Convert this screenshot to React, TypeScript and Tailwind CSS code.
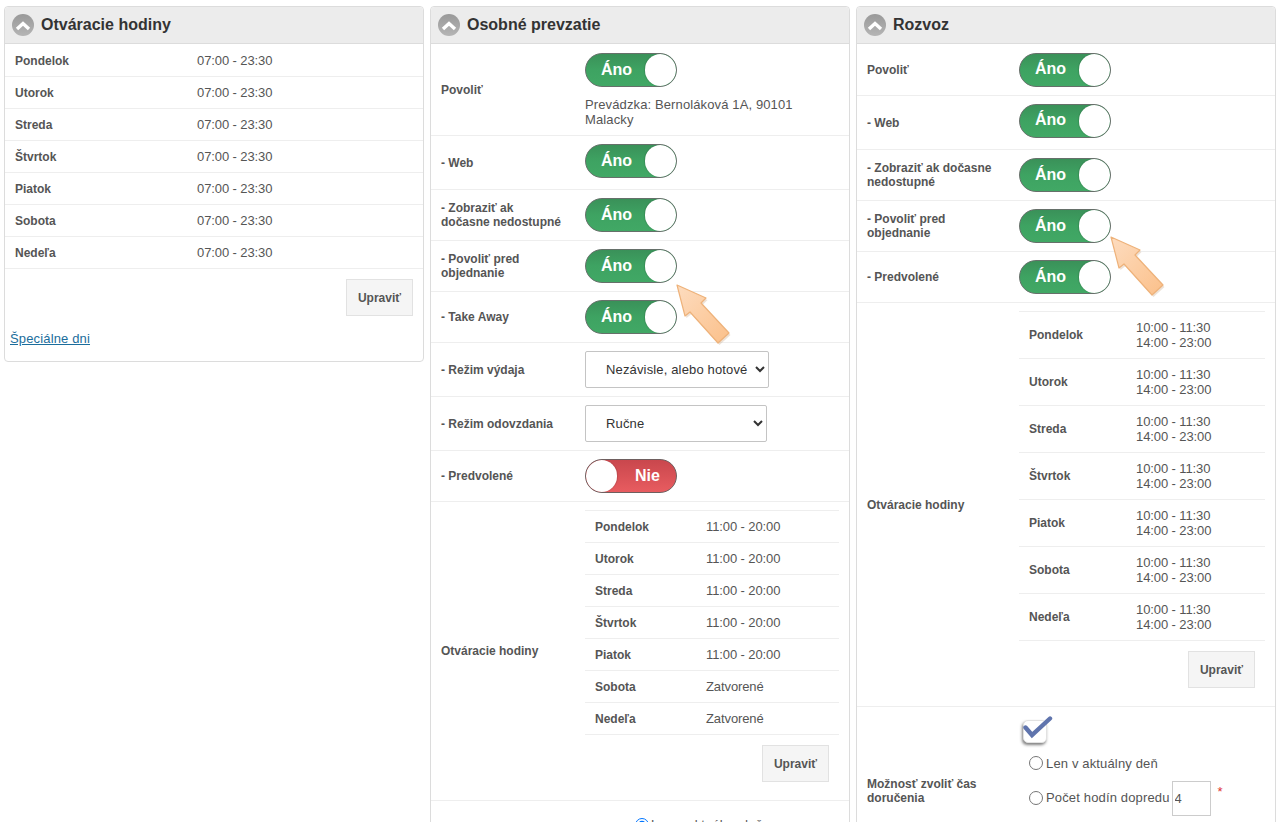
import React from "react";

const FONT = "font-['Liberation_Sans',Arial,sans-serif]";

function Arrow({ className }: { className: string }) {
  return (
    <svg className={`absolute pointer-events-none z-10 ${className}`} width="62" height="68" viewBox="0 0 62 68">
      <defs>
        <linearGradient id="ag" x1="0" y1="0" x2="1" y2="1">
          <stop offset="0" stopColor="#fddcbf" />
          <stop offset="1" stopColor="#fbc08a" />
        </linearGradient>
      </defs>
      <path d="M1 1 L30 14 L25 19 L53 49 L42 59 L14 28 L9 32 Z" fill="#b98a60" opacity="0.25" transform="translate(1.5 2)" />
      <path d="M1 1 L30 14 L25 19 L53 49 L42 59 L14 28 L9 32 Z" fill="url(#ag)" stroke="#eeb27a" strokeWidth="1.2" strokeLinejoin="round" />
    </svg>
  );
}

function Toggle({ on = true, arrow }: { on?: boolean; arrow?: string }) {
  return (
    <div className="relative w-[92px] h-[34px]">
      {on ? (
        <div className="flex items-center h-full rounded-full border border-[#66706a] bg-linear-to-b from-[#3a9159] via-[#3ea362] to-[#41a865] overflow-hidden">
          <span className="w-[58px] pl-[3px] text-center text-white font-bold text-[16px] leading-none -mt-[1px]">Áno</span>
          <span className="ml-auto w-[31px] h-[32px] rounded-full bg-white shadow-[-1px_0_1px_rgba(0,0,0,0.12)]" />
        </div>
      ) : (
        <div className="flex items-center h-full rounded-full border border-[#6f5f5f] bg-linear-to-b from-[#c9474d] to-[#e85c60] overflow-hidden">
          <span className="w-[31px] h-[32px] rounded-full bg-white shadow-[1px_0_1px_rgba(0,0,0,0.12)]" />
          <span className="flex-1 pl-[2px] text-center text-white font-bold text-[16px] leading-none -mt-[1px]">Nie</span>
        </div>
      )}
      {arrow && <Arrow className={arrow} />}
    </div>
  );
}

function Header({ title }: { title: string }) {
  return (
    <div className="flex items-center h-[37px] bg-[#ececec] border-b border-[#dcdcdc] rounded-t-[4px] pl-[7px] gap-[7px]">
      <span className="flex items-center justify-center w-[22px] h-[22px] rounded-full bg-linear-to-b from-[#999999] to-[#b5b5b5]">
        <svg width="16" height="11" viewBox="0 0 16 11">
          <path d="M2 9 L8 3.5 L14 9" fill="none" stroke="#fff" strokeWidth="3.4" />
        </svg>
      </span>
      <span className="text-[16px] font-bold text-[#333] leading-none">{title}</span>
    </div>
  );
}

function Button() {
  return (
    <button className="w-[67px] h-[37px] bg-[#f5f5f5] border border-[#e2e2e2] text-[12px] font-bold text-[#555]">
      Upraviť
    </button>
  );
}

function Row({
  label,
  labelW,
  className,
  children,
}: {
  label: React.ReactNode;
  labelW: string;
  className: string;
  children: React.ReactNode;
}) {
  return (
    <div className={`flex items-center border-b border-[#eeeeee] ${className}`}>
      <div className={`${labelW} shrink-0 pl-[10px] pr-[10px] text-[12px] leading-[14px] font-bold text-[#555]`}>
        {label}
      </div>
      <div className="flex-1 min-w-0">{children}</div>
    </div>
  );
}

function Hours({ data }: { data: [string, string][] }) {
  return (
    <div className="border-t border-[#eeeeee]">
      {data.map(([d, t]) => (
        <div key={d} className="flex items-center h-[32px] border-b border-[#eeeeee]">
          <span className="w-[121px] pl-[10px] text-[12px] font-bold text-[#555]">{d}</span>
          <span className="text-[13px] tracking-[-0.1px] text-[#555]">{t}</span>
        </div>
      ))}
    </div>
  );
}

function Hours2() {
  const days = ["Pondelok", "Utorok", "Streda", "Štvrtok", "Piatok", "Sobota", "Nedeľa"];
  return (
    <div className="border-t border-[#eeeeee]">
      {days.map((d) => (
        <div key={d} className="flex items-center h-[47px] border-b border-[#eeeeee]">
          <span className="w-[117px] pl-[10px] text-[12px] font-bold text-[#555]">{d}</span>
          <span className="text-[13px] leading-[15px] tracking-[-0.1px] text-[#555]">
            10:00 - 11:30
            <br />
            14:00 - 23:00
          </span>
        </div>
      ))}
    </div>
  );
}

const panel = "border border-[#dcdcdc] rounded-[4px] bg-white";

export default function App() {
  const d7 = ["Pondelok", "Utorok", "Streda", "Štvrtok", "Piatok", "Sobota", "Nedeľa"];
  const mid: [string, string][] = [
    ["Pondelok", "11:00 - 20:00"],
    ["Utorok", "11:00 - 20:00"],
    ["Streda", "11:00 - 20:00"],
    ["Štvrtok", "11:00 - 20:00"],
    ["Piatok", "11:00 - 20:00"],
    ["Sobota", "Zatvorené"],
    ["Nedeľa", "Zatvorené"],
  ];
  return (
    <div className={`${FONT} h-[822px] overflow-hidden bg-white pt-[6px] pl-[4px] flex items-start gap-[6px]`}>
      {/* Left */}
      <section className={`${panel} w-[420px] h-[356px]`}>
        <Header title="Otváracie hodiny" />
        <div className="pt-[1px]">
          {d7.map((d) => (
            <div key={d} className="flex items-center h-[32px] border-b border-[#eeeeee]">
              <span className="w-[192px] pl-[10px] text-[12px] font-bold text-[#555]">{d}</span>
              <span className="text-[13px] tracking-[-0.1px] text-[#555]">07:00 - 23:30</span>
            </div>
          ))}
        </div>
        <div className="flex justify-end pr-[10px] pt-[10px]">
          <Button />
        </div>
        <div className="pl-[5px] pt-[10px]">
          <a href="#" className="text-[13px] tracking-[0.15px] underline text-[#1b6d9c]">
            Špeciálne dni
          </a>
        </div>
      </section>

      {/* Middle */}
      <section className={`${panel} w-[420px] h-[900px] rounded-b-none`}>
        <Header title="Osobné prevzatie" />
        <Row label="Povoliť" labelW="w-[154px]" className="pt-[9px] pb-[8px]">
          <Toggle />
          <div className="mt-[10px] text-[13px] leading-[15px] tracking-[0.12px] text-[#555] w-[230px]">
            Prevádzka: Bernoláková 1A, 90101 Malacky
          </div>
        </Row>
        <Row label="- Web" labelW="w-[154px]" className="h-[54px]">
          <div className="pb-[3px]">
            <Toggle />
          </div>
        </Row>
        <Row label={<>- Zobraziť ak<br />dočasne nedostupné</>} labelW="w-[154px]" className="h-[51px]">
          <Toggle />
        </Row>
        <Row label={<>- Povoliť pred<br />objednanie</>} labelW="w-[154px]" className="h-[51px]">
          <Toggle arrow="left-[91px] top-[35px]" />
        </Row>
        <Row label="- Take Away" labelW="w-[154px]" className="h-[51px]">
          <Toggle />
        </Row>
        <Row label="- Režim výdaja" labelW="w-[154px]" className="h-[54px]">
          <select className="w-[184px] h-[37px] pl-[16px] bg-white border border-[#c4c4c4] rounded-[2px] text-[13px] tracking-[0.15px] text-[#333]">
            <option>Nezávisle, alebo hotové</option>
          </select>
        </Row>
        <Row label="- Režim odovzdania" labelW="w-[154px]" className="h-[54px]">
          <select className="w-[182px] h-[37px] pl-[16px] bg-white border border-[#c4c4c4] rounded-[2px] text-[13px] tracking-[0.15px] text-[#333]">
            <option>Ručne</option>
          </select>
        </Row>
        <Row label="- Predvolené" labelW="w-[154px]" className="h-[51px]">
          <Toggle on={false} />
        </Row>
        <Row label="Otváracie hodiny" labelW="w-[154px]" className="h-[299px]">
          <div className="pr-[10px] pb-[10px]">
            <Hours data={mid} />
            <div className="flex justify-end pr-[10px] pt-[10px]">
              <Button />
            </div>
          </div>
        </Row>
        <div className="pl-[204px] pt-[14px] flex items-center gap-[2px] text-[13px] tracking-[0.15px] text-[#555]">
          <input type="radio" defaultChecked className="m-0 w-[14px] h-[14px]" />
          <span>Len v aktuálny deň</span>
        </div>
      </section>

      {/* Right */}
      <section className={`${panel} w-[420px] h-[900px] rounded-b-none`}>
        <Header title="Rozvoz" />
        <Row label="Povoliť" labelW="w-[162px]" className="h-[52px]">
          <Toggle />
        </Row>
        <Row label="- Web" labelW="w-[162px]" className="h-[54px]">
          <div className="pb-[4px]">
            <Toggle />
          </div>
        </Row>
        <Row label={<>- Zobraziť ak dočasne<br />nedostupné</>} labelW="w-[162px]" className="h-[51px]">
          <Toggle />
        </Row>
        <Row label={<>- Povoliť pred<br />objednanie</>} labelW="w-[162px]" className="h-[51px]">
          <Toggle arrow="left-[91px] top-[27px]" />
        </Row>
        <Row label="- Predvolené" labelW="w-[162px]" className="h-[51px]">
          <Toggle />
        </Row>
        <Row label="Otváracie hodiny" labelW="w-[162px]" className="h-[404px]">
          <div className="pr-[10px] pb-[10px]">
            <Hours2 />
            <div className="flex justify-end pr-[10px] pt-[10px]">
              <Button />
            </div>
          </div>
        </Row>
        <Row label={<>Možnosť zvoliť čas<br />doručenia</>} labelW="w-[162px]" className="">
          <div className="text-[13px] tracking-[0.15px] text-[#555] pt-[13px] pb-[58px]">
            <div className="w-[24px] h-[23px] ml-[4px] rounded-[5px] bg-white border border-[#e2e2e2] shadow-[-1px_2px_3px_rgba(0,0,0,0.5)] relative">
              <svg className="absolute -top-[5px] -left-[1px]" width="30" height="26" viewBox="0 0 30 26">
                <path d="M2.5 11.5 L9 19 L27 2.5" fill="none" stroke="#5f74ad" strokeWidth="4.4" strokeLinecap="round" />
              </svg>
            </div>
            <label className="flex items-center gap-[3px] ml-[10px] mt-[13px] h-[16px]">
              <input type="radio" name="t" className="m-0 w-[14px] h-[14px] -mt-[2px]" />
              <span>Len v aktuálny deň</span>
            </label>
            <label className="flex items-center gap-[3px] ml-[10px] mt-[8px] h-[36px]">
              <input type="radio" name="t" className="m-0 w-[14px] h-[14px] mt-[0px]" />
              <span>Počet hodín dopredu</span>
              <input
                defaultValue="4"
                className="w-[39px] h-[35px] -ml-[1px] pl-[2px] border border-[#ccc] bg-white text-[13px]"
              />
              <span className="text-[#d33] ml-[4px] -mt-[12px]">*</span>
            </label>
          </div>
        </Row>
      </section>
    </div>
  );
}
